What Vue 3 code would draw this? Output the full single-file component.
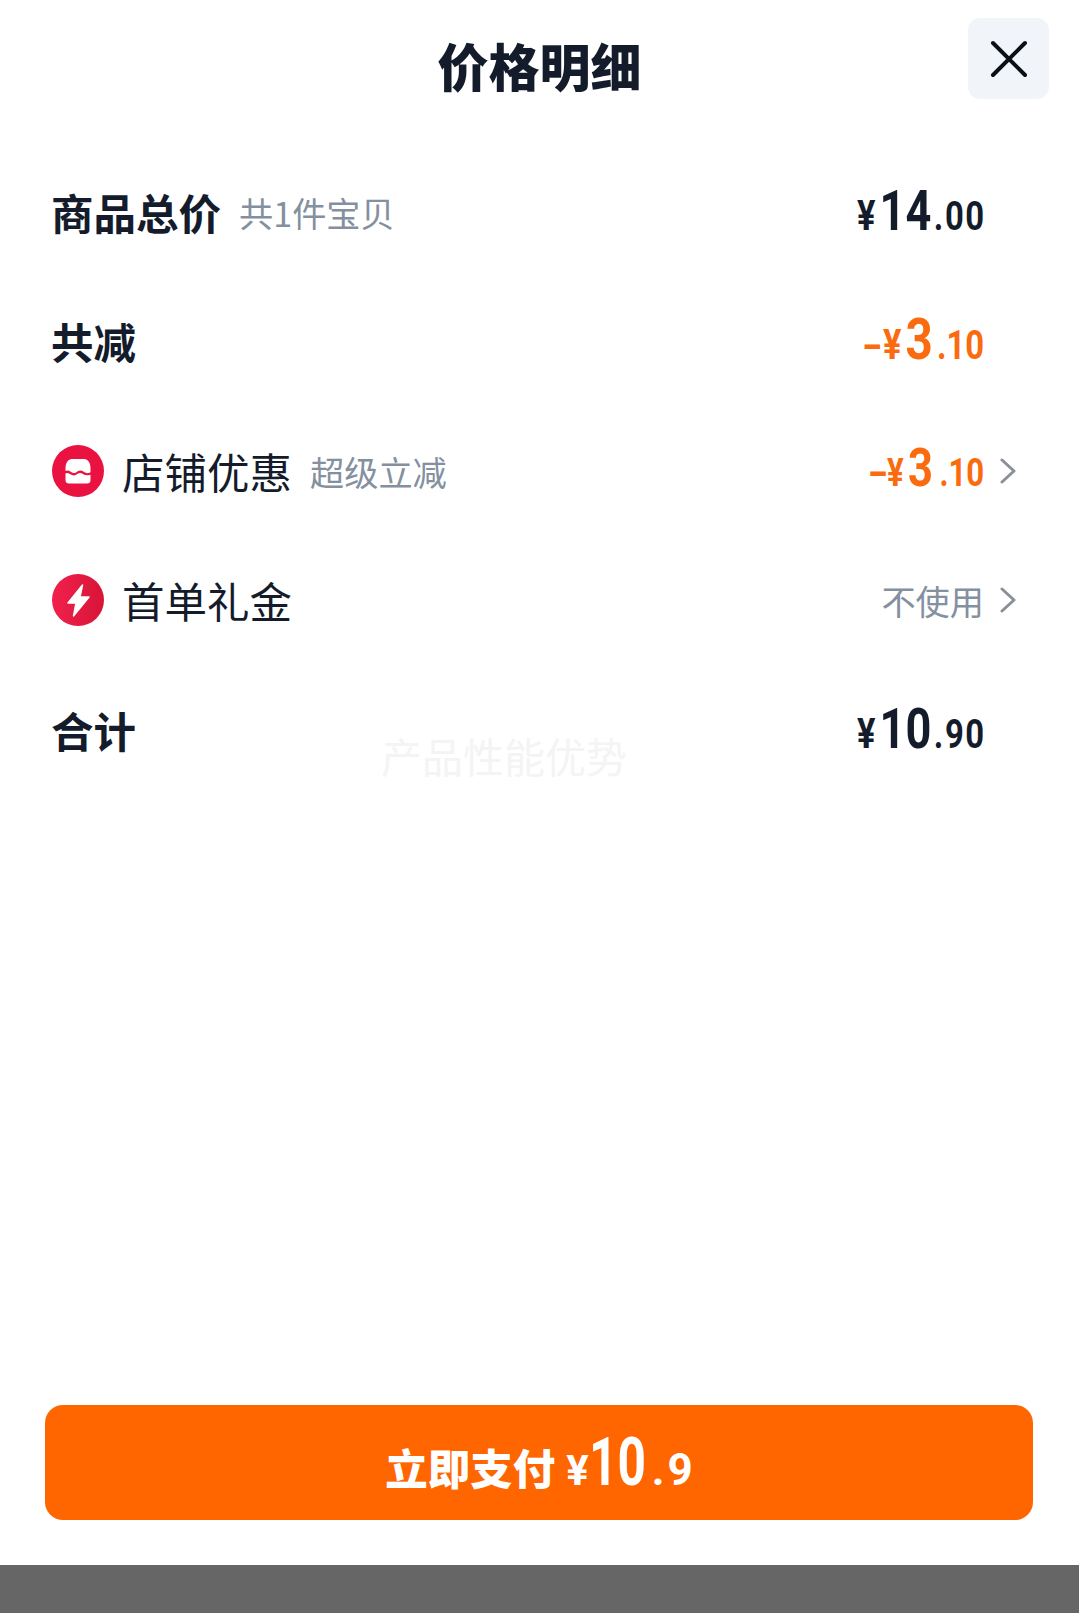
<template>
  <div class="page">
    <div class="sheet">
      <div class="header">
        <h1 class="title">价格明细</h1>
        <button class="close">
          <svg width="38" height="38" viewBox="0 0 38 38">
            <path d="M3 3L35 35M35 3L3 35" stroke="#0b0f17" stroke-width="4" stroke-linecap="round" fill="none" />
          </svg>
        </button>
      </div>

      <div class="rows">
        <div v-for="row in rows" :key="row.label" class="row">
          <svg v-if="row.icon === 'shop'" class="icon" viewBox="0 0 52 52">
            <circle cx="26" cy="26" r="26" fill="#ea1240" />
            <path d="M20 14H32C36 14 38.500 18 38.500 23V35Q38.500 38.500 35 38.500H17Q13.500 38.500 13.500 35V23C13.500 18 16 14 20 14Z" fill="#fff" />
            <path d="M12 28Q15 25.500 18.500 28T25 28T31.500 28T40 28" stroke="#ea1240" stroke-width="2.200" fill="none" />
          </svg>
          <svg v-if="row.icon === 'bolt'" class="icon" viewBox="0 0 52 52">
            <defs>
              <linearGradient id="boltFill" x1="0" y1="0" x2="1" y2="0">
                <stop offset="0" stop-color="#f0214c" />
                <stop offset="1" stop-color="#d81437" />
              </linearGradient>
            </defs>
            <circle cx="26" cy="26" r="26" fill="url(#boltFill)" />
            <path d="M30.500 11L16 29H24L21.500 42L37 23H28Z" fill="#fff" stroke="#fff" stroke-width="1.500" stroke-linejoin="round" />
          </svg>
          <span class="label" :class="{ strong: row.strong }">{{ row.label }}</span>
          <span v-if="row.note" class="note">{{ row.note }}</span>
          <span class="spacer"></span>
          <span v-if="row.text" class="note">{{ row.text }}</span>
          <span v-if="row.big" class="amount" :class="{ orange: row.orange, small: row.small }">
            <span v-if="row.sign" class="sign">-</span><span class="cur">¥</span><span class="big">{{ row.big }}</span><span class="dec">{{ row.dec }}</span>
          </span>
          <span v-if="(row.big || row.text) && !row.arrow" class="arrow-slot"></span>
          <svg v-if="row.arrow" class="arrow" width="16" height="26" viewBox="0 0 16 26">
            <path d="M2 2L14 13L2 24" stroke="#8a8f99" stroke-width="3" fill="none" stroke-linecap="round" stroke-linejoin="round" />
          </svg>
        </div>
      </div>

      <div class="watermark">产品性能优势</div>

      <div class="footer">
        <button class="pay">
          <span class="pay-label">立即支付</span>
          <span class="pay-cur">¥</span><span class="pay-big">10</span><span class="pay-dec">.9</span>
        </button>
      </div>
    </div>
    <div class="bottom-bar"></div>
  </div>
</template>

<script setup>
const rows = [
  { label: "商品总价", strong: true, note: "共1件宝贝", big: "14", dec: ".00" },
  { label: "共减", strong: true, sign: true, big: "3", dec: ".10", orange: true },
  { label: "店铺优惠", icon: "shop", note: "超级立减", sign: true, big: "3", dec: ".10", orange: true, small: true, arrow: true },
  { label: "首单礼金", icon: "bolt", text: "不使用", arrow: true },
  { label: "合计", strong: true, big: "10", dec: ".90" },
];
</script>

<style>
html,
body {
  margin: 0;
  background: #fff;
}
</style>

<style scoped>
.page {
  width: 1079px;
  height: 1613px;
  display: flex;
  flex-direction: column;
  font-family: "Noto Sans CJK SC", "Liberation Sans", sans-serif;
  color: #141c2c;
  overflow: hidden;
}
.sheet {
  flex: 1;
  position: relative;
  display: flex;
  flex-direction: column;
  background: #fff;
}
.header {
  display: flex;
  justify-content: center;
  align-items: center;
  position: relative;
  height: 135px;
}
.title {
  margin: 0 0 5px;
  font-size: 51px;
  font-weight: 900;
  line-height: 1;
}
.close {
  position: absolute;
  top: 18px;
  right: 30px;
  width: 81px;
  height: 81px;
  border: none;
  padding: 0;
  border-radius: 12px;
  background: #f1f5f9;
  display: flex;
  align-items: center;
  justify-content: center;
}
.rows {
  padding: 12px 63px 0 52px;
}
.row {
  height: 129.500px;
  display: flex;
  align-items: center;
}
.icon {
  width: 52px;
  height: 52px;
  margin-right: 18px;
  flex: none;
}
.label {
  font-size: 42.500px;
  line-height: 1;
}
.label.strong {
  font-weight: 700;
  margin-left: -1px;
}
.note {
  font-size: 34.200px;
  line-height: 1;
  color: #8490a0;
  margin-left: 18px;
}
.spacer {
  flex: 1;
}
.amount {
  font-family: "Roboto", sans-serif;
  font-weight: 700;
  display: inline-flex;
  align-items: baseline;
  line-height: 1;
  transform: scaleX(0.82);
  transform-origin: right center;
}
.sign {
  display: inline-block;
  font-size: 40px;
  margin-right: 5px;
  transform: scaleX(1.7);
}
.cur {
  font-size: 42px;
  margin-right: 5px;
}
.big {
  font-size: 55px;
}
.dec {
  font-size: 40px;
  font-weight: 700;
  letter-spacing: 2px;
  margin-left: 3px;
  margin-right: -2px;
}
.orange {
  color: #fa6a0f;
  margin-top: -5px;
}
.orange .big {
  font-size: 58px;
}
.orange .dec {
  letter-spacing: 0;
  margin-left: 5px;
  margin-right: 0;
}
.small .sign {
  margin-right: 3px;
}
.small .cur {
  font-size: 38px;
}
.small .big {
  font-size: 53px;
}
.small .dec {
  font-size: 38px;
  margin-left: 8px;
}
.arrow {
  margin-left: 16px;
  flex: none;
}
.arrow-slot {
  width: 32px;
  flex: none;
}
.watermark {
  position: absolute;
  left: 381px;
  top: 733px;
  font-size: 41px;
  line-height: 1.1;
  color: #f4f4f4;
}
.footer {
  margin-top: auto;
  padding: 0 46px 45px 45px;
}
.pay {
  width: 100%;
  height: 115px;
  border: none;
  border-radius: 18px;
  background: #ff6600;
  color: #fff;
  font-family: inherit;
  display: flex;
  align-items: baseline;
  justify-content: center;
  padding: 18px 0 0 3px;
}
.pay-label {
  font-size: 42.500px;
  font-weight: 900;
  margin-right: 11px;
}
.pay-cur {
  font-family: "Roboto", sans-serif;
  font-size: 42px;
  font-weight: 700;
}
.pay-big {
  display: inline-block;
  font-family: "Roboto", sans-serif;
  font-size: 67px;
  font-weight: 700;
  transform: scaleX(0.74);
  transform-origin: left center;
  margin-right: -14px;
}
.pay-dec {
  font-family: "Roboto", sans-serif;
  font-size: 44px;
  font-weight: 700;
  letter-spacing: 3px;
}
.bottom-bar {
  height: 48px;
  background: #666;
  flex: none;
}
</style>
